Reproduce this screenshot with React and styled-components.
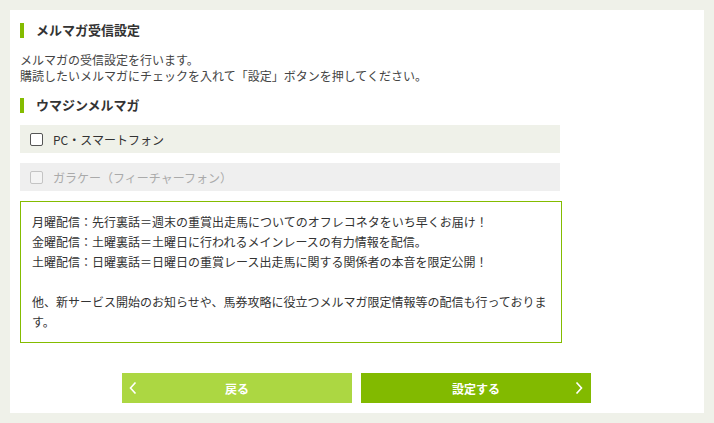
import React from "react"
import styled, { createGlobalStyle } from "styled-components"

const GlobalStyle = createGlobalStyle`
* {
    margin: 0;
    padding: 0;
    box-sizing: border-box;
}

body {
    background-color: #eff1e9;
    color: #333333;
    font-family: "Noto Sans CJK JP", "Noto Sans", sans-serif;
}
`

const Page = styled.div`
padding: 10px;
height: 423px;
`

const Panel = styled.section`
background-color: #ffffff;
height: 403px;
padding: 12px 10px 0 10px;
display: flex;
flex-direction: column;
`

const Heading = styled.h2`
display: flex;
align-items: center;
gap: 12px;
height: 16px;
font-size: 13px;
font-weight: bold;
color: #333333;
line-height: 16px;
&::before {
    content: "";
    display: block;
    width: 4px;
    height: 15px;
    background-color: #84bc00;
}
`

const Lead = styled.p`
margin-top: 14px;
font-size: 12px;
line-height: 16px;
color: #444444;
`

const SubHeading = styled(Heading)`
margin-top: 13px;
`

const Options = styled.div`
margin-top: 12px;
width: 540px;
display: flex;
flex-direction: column;
gap: 10px;
`

const Option = styled.label`
display: flex;
align-items: center;
gap: 10px;
height: 28px;
padding-left: 10px;
font-size: 12px;
background-color: ${props => props.disabled ? "#efefef" : "#eff1e9"};
color: ${props => props.disabled ? "#aaaaaa" : "#333333"};
`

const Box = styled.span`
width: 13px;
height: 13px;
border-radius: 2px;
border: 1px solid ${props => props.disabled ? "#c4c4c4" : "#555555"};
background-color: ${props => props.disabled ? "#f4f4f4" : "#ffffff"};
`

const Notice = styled.div`
margin-top: 10px;
width: 542px;
border: 1px solid #84bc00;
padding: 10px 11px 10px 11px;
font-size: 12px;
line-height: 20px;
color: #333333;
`

const Blank = styled.div`
height: 20px;
`

const Buttons = styled.div`
margin-top: 30px;
padding-left: 102px;
display: flex;
gap: 9px;
`

const Button = styled.button`
position: relative;
width: 230px;
height: 30px;
border: none;
font-family: "Noto Sans CJK JP", sans-serif;
font-size: 12px;
font-weight: bold;
color: #ffffff;
background-color: ${props => props.primary ? "#82ba00" : "#acd742"};
`

const Chevron = styled.svg`
position: absolute;
top: 9px;
${props => props.right ? "right: 8px;" : "left: 7px;"}
`

const ChevronLeft = () => (
    <Chevron width="8" height="12" viewBox="0 0 8 12">
        <polyline points="6.5,0.5 1.5,6 6.5,11.5" fill="none" stroke="#ffffff" strokeWidth="1.6" />
    </Chevron>
)

const ChevronRight = () => (
    <Chevron right width="8" height="12" viewBox="0 0 8 12">
        <polyline points="1.5,0.5 6.5,6 1.5,11.5" fill="none" stroke="#ffffff" strokeWidth="1.6" />
    </Chevron>
)

export default function App() {
    return (
        <Page>
            <GlobalStyle />
            <Panel>
                <Heading>メルマガ受信設定</Heading>
                <Lead>
                    メルマガの受信設定を行います。<br />
                    購読したいメルマガにチェックを入れて「設定」ボタンを押してください。
                </Lead>
                <SubHeading>ウマジンメルマガ</SubHeading>
                <Options>
                    <Option>
                        <Box />
                        PC・スマートフォン
                    </Option>
                    <Option disabled>
                        <Box disabled />
                        ガラケー（フィーチャーフォン）
                    </Option>
                </Options>
                <Notice>
                    月曜配信：先行裏話＝週末の重賞出走馬についてのオフレコネタをいち早くお届け！<br />
                    金曜配信：土曜裏話＝土曜日に行われるメインレースの有力情報を配信。<br />
                    土曜配信：日曜裏話＝日曜日の重賞レース出走馬に関する関係者の本音を限定公開！
                    <Blank />
                    他、新サービス開始のお知らせや、馬券攻略に役立つメルマガ限定情報等の配信も行っております。
                </Notice>
                <Buttons>
                    <Button>
                        <ChevronLeft />
                        戻る
                    </Button>
                    <Button primary>
                        設定する
                        <ChevronRight />
                    </Button>
                </Buttons>
            </Panel>
        </Page>
    )
}
